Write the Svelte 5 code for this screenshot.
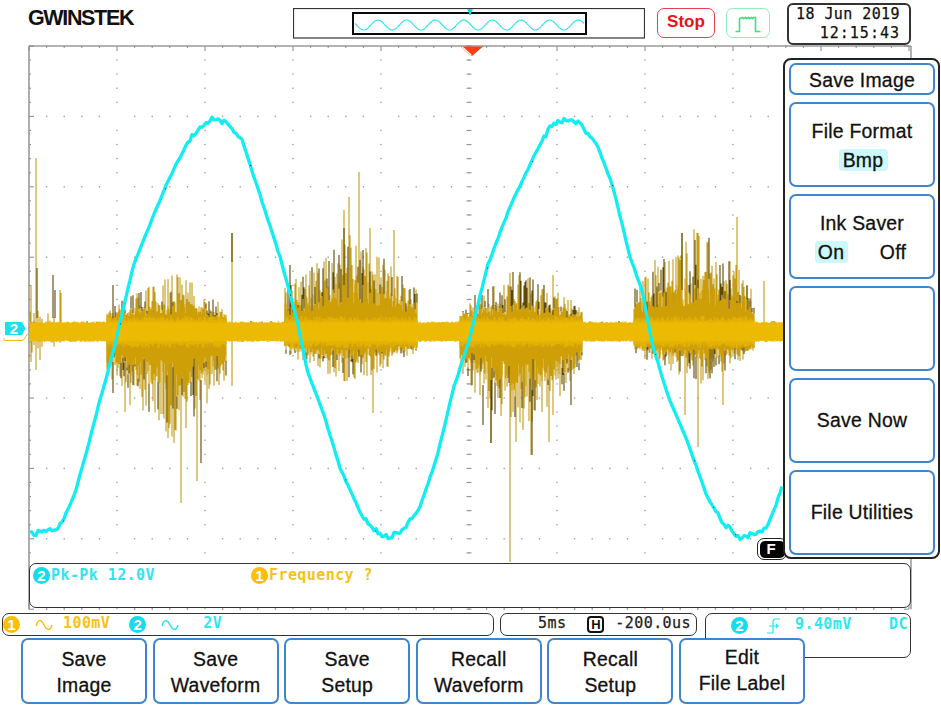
<script lang="ts">
	// graticule: 10 x 8 divisions, in page coordinates
	const left = 29;
	const top = 46;
	const divX = 88;
	const divY = 70.4;
	const right = left + divX * 10;
	const bottom = top + divY * 8;
	const midX = left + divX * 5;
	const midY = top + divY * 4;

	const bottomButtons = [
		['Save', 'Image'],
		['Save', 'Waveform'],
		['Save', 'Setup'],
		['Recall', 'Waveform'],
		['Recall', 'Setup'],
		['Edit', 'File Label']
	];

	let seed = 20190618;
	function rnd() {
		seed = (seed * 1664525 + 1013904223) % 4294967296;
		return seed / 4294967296;
	}

	function range(n: number) {
		return Array.from({ length: n }, (_, i) => i);
	}

	const dotsH: [number, number][] = [];
	const dotsV: [number, number][] = [];
	for (const r of range(9)) {
		for (const c of range(51)) {
			if (c % 5) dotsH.push([left + (c * divX) / 5, top + r * divY]);
		}
	}
	for (const c of range(11)) {
		for (const r of range(41)) {
			if (r % 5) dotsV.push([left + c * divX, top + (r * divY) / 5]);
		}
	}

	let tickPath = '';
	for (const c of range(51)) {
		const x = left + (c * divX) / 5;
		const len = c % 5 ? 2 : 5;
		tickPath += `M${x} ${top}v${len}M${x} ${bottom}v-${len}`;
		tickPath += `M${x} ${midY - 1}v2`;
	}
	for (const r of range(41)) {
		const y = top + (r * divY) / 5;
		const len = r % 5 ? 2 : 5;
		tickPath += `M${left} ${y}h${len}M${right} ${y}h-${len}`;
		tickPath += `M${midX - 2.5} ${y}h5`;
	}

	// cyan trace, traced by eye from the reference
	const cyanPoints = [
		[30, 533], [40, 533], [50, 531], [58, 527], [63, 520], [68, 509], [75, 493], [87, 450], [100, 400],
		[113, 353], [123, 310], [133, 267], [150, 224], [167, 183], [187, 143], [200, 127], [212, 119],
		[225, 122], [242, 140], [260, 195], [280, 257], [297, 320], [307, 370], [323, 412], [340, 468],
		[363, 518], [378, 533], [388, 537], [403, 531], [420, 507], [437, 457], [453, 390], [470, 337],
		[487, 267], [510, 207], [537, 150], [552, 124], [566, 119], [580, 124], [597, 145], [613, 187],
		[630, 257], [642, 290], [653, 347], [667, 393], [687, 440], [707, 497], [725, 525], [740, 538],
		[755, 533], [767, 527], [775, 508], [783, 483]
	];

	function cyanAt(x: number) {
		for (let i = 1; i < cyanPoints.length; i++) {
			const [x0, y0] = cyanPoints[i - 1];
			const [x1, y1] = cyanPoints[i];
			if (x <= x1) return y0 + ((y1 - y0) * (x - x0)) / (x1 - x0);
		}
		return 483;
	}

	let cyanPath = '';
	for (let x = 30; x <= 783; x += 2) {
		const noisy = x < 60 || Math.abs(x - 212) < 24 || Math.abs(x - 566) < 24 || Math.abs(x - 388) < 24 || Math.abs(x - 740) < 24;
		const y = cyanAt(x) + (rnd() - 0.5) * (noisy ? 5 : 1.6);
		cyanPath += `${x === 30 ? 'M' : 'L'}${x} ${y.toFixed(1)}`;
	}

	let cyanSpecks = '';
	for (const x of [63, 120, 165, 250, 290, 345, 375, 487, 532, 612, 655, 694, 713, 735]) {
		cyanSpecks += `M${x} ${(cyanAt(x) + 1).toFixed(1)}h1.2`;
	}

	// yellow trace: noise bursts described by up/down envelopes
	type Burst = { from: number; to: number; peak: number; up: number; down: number; coreUp: number; coreDown: number };
	const bursts: Burst[] = [
		{ from: 107, to: 226, peak: 178, up: 50, down: 92, coreUp: 20, coreDown: 50 },
		{ from: 285, to: 417, peak: 352, up: 88, down: 44, coreUp: 42, coreDown: 18 },
		{ from: 460, to: 582, peak: 515, up: 54, down: 90, coreUp: 20, coreDown: 50 },
		{ from: 634, to: 754, peak: 700, up: 92, down: 44, coreUp: 46, coreDown: 18 }
	];

	const spikeLight: number[][] = [
		[36, 158, 370], [31, 285, 362], [61, 293, 332], [40, 332, 360], [232, 233, 386], [181, 332, 503],
		[197, 332, 481], [168, 332, 438], [174, 332, 443], [125, 332, 412], [130, 332, 405], [359, 172, 332],
		[349, 197, 332], [344, 210, 332], [394, 230, 332], [370, 228, 332], [373, 332, 413], [510, 273, 562],
		[491, 332, 443], [531, 332, 455], [553, 275, 415], [571, 300, 332], [516, 332, 442], [549, 332, 442],
		[737, 217, 332], [698, 233, 447], [682, 233, 332], [685, 332, 415], [764, 281, 332], [747, 285, 332],
		[723, 332, 405], [707, 270, 332], [655, 260, 332], [665, 262, 332], [60, 290, 332]
	];
	const spikeDark: number[][] = [
		[37, 268, 318], [53, 275, 318], [55, 290, 318], [232, 233, 262], [113, 285, 318], [113, 362, 393],
		[201, 380, 463], [344, 228, 285], [363, 250, 285], [483, 425, 385], [571, 360, 405], [532, 390, 455],
		[491, 380, 443], [682, 233, 290], [695, 240, 285], [720, 265, 290], [730, 280, 300], [290, 265, 315]
	];

	let lightPath = '';
	let darkPath = '';
	let corePath = '';
	let midPath = '';
	let bandPath = '';

	for (const [x, a, b] of spikeLight) lightPath += `M${x} ${a}V${b}`;
	for (const [x, a, b] of spikeDark) darkPath += `M${x} ${a}V${b}`;

	function envelope(b: Burst, x: number) {
		const t = x < b.peak ? (x - b.from) / (b.peak - b.from) : (b.to - x) / (b.to - b.peak);
		return 0.42 + 0.58 * Math.max(t, 0);
	}

	for (let x = 30; x <= 783; x++) {
		bandPath += `M${x} ${(323 - rnd() * 1.6).toFixed(1)}V${(340.5 + rnd() * 1.6).toFixed(1)}`;
		if (rnd() < 0.1) darkPath += `M${x} ${(323 - rnd() * 2).toFixed(1)}v2`;
		const burst = bursts.find((b) => x >= b.from && x <= b.to);
		if (!burst) continue;
		const e = envelope(burst, x);
		const cu = 332 - (10 + burst.coreUp * e * (0.4 + rnd() * 0.7));
		const cd = 332 + 10 + burst.coreDown * e * (0.4 + rnd() * 0.7);
		corePath += `M${x} ${cu.toFixed(1)}V${cd.toFixed(1)}`;
		midPath += `M${x} ${(332 - 11 - rnd() * 5).toFixed(1)}V${(332 + 11 + rnd() * 5).toFixed(1)}`;
		if (rnd() < 0.88) {
			const su = 332 - burst.up * e * (0.55 + Math.pow(rnd(), 1.3) * 0.65);
			if (su < cu) {
				if (rnd() < 0.3) darkPath += `M${x} ${su.toFixed(1)}V${cu.toFixed(1)}`;
				else lightPath += `M${x} ${su.toFixed(1)}V332`;
			}
		}
		if (rnd() < 0.88) {
			const sd = 332 + burst.down * e * (0.55 + Math.pow(rnd(), 1.3) * 0.65);
			if (sd > cd) {
				if (rnd() < 0.3) darkPath += `M${x} ${cd.toFixed(1)}V${sd.toFixed(1)}`;
				else lightPath += `M${x} 332V${sd.toFixed(1)}`;
			}
		}
	}

	// the screen opens with a short burst too
	for (let x = 30; x <= 68; x += 2) {
		const e = Math.max(0.25, 1 - (x - 30) / 50);
		lightPath += `M${x} ${(332 - 35 * e * rnd()).toFixed(1)}V${(332 + 28 * e * rnd()).toFixed(1)}`;
	}

	// overview sine inside the memory bar
	let overviewPath = '';
	for (let x = 355; x <= 584; x++) {
		const y = 25 - 5 * Math.cos(((x - 378) / 28.6) * 2 * Math.PI);
		overviewPath += `${x === 355 ? 'M' : 'L'}${x} ${y.toFixed(1)}`;
	}
</script>

<div class="screen">
	<header class="top">
		<div class="logo">GWINSTEK</div>
		<div class="overview">
			<svg class="overview-svg" viewBox="293 8 352 31" width="352" height="31">
				<rect x="293.5" y="8.5" width="351" height="29.5" fill="none" stroke="#333" stroke-width="1.2" />
				<rect x="353" y="13" width="233" height="21" fill="none" stroke="#0a0a0a" stroke-width="2" />
				<path d={overviewPath} fill="none" stroke="#33e6ee" stroke-width="1.2" />
				<path d="M467 9h6l-2 4v2h-2v-2z" fill="#12d8de" />
			</svg>
		</div>
		<div class="stop">Stop</div>
		<div class="run">
			<svg viewBox="727.500 9.500 41 27" width="41" height="27">
				<path d="M735 31h4V18l3-1 1 1 2-1 1 1 2-1 1 1 2-1 1 1 1-1h2V31h5" fill="none" stroke="#39e27f" stroke-width="1.6" />
			</svg>
		</div>
		<div class="clock">
			<div>18 Jun 2019</div>
			<div class="time">12:15:43</div>
		</div>
	</header>

	<div class="scope">
		<svg class="plot" viewBox="{left} {top} 882 563" width="882" height="563">
			<line x1={left} y1={top} x2="911" y2={top} stroke="#9a9a9a" stroke-width="1.5" />
			<line x1={left} y1={top} x2={left} y2={bottom} stroke="#9a9a9a" stroke-width="1.6" />
			<line x1="911" y1={top} x2="911" y2={bottom} stroke="#9a9a9a" stroke-width="1.5" />
			<path d={tickPath} fill="none" stroke="#8a8a8a" stroke-width="1" />
			{#each dotsH as [x, y]}
				<rect x={x - 0.7} y={y - 0.7} width="1.4" height="1.4" fill="#a0a0a0" />
			{/each}
			{#each dotsV as [x, y]}
				<rect x={x - 0.7} y={y - 0.7} width="1.4" height="1.4" fill="#a0a0a0" />
			{/each}

			<path d={lightPath} fill="none" stroke="#c39b16" stroke-width="1.1" />
			<path d={corePath} fill="none" stroke="#cf9f08" stroke-width="1.05" />
			<path d={darkPath} fill="none" stroke="#5c4703" stroke-width="1.1" />
			<path d={midPath} fill="none" stroke="#e3b006" stroke-width="1.05" />
			<path d={bandPath} fill="none" stroke="#ecba02" stroke-width="1.05" />
			<path d={cyanPath} fill="none" stroke="#10eef2" stroke-width="3.3" stroke-linejoin="round" />
			<path d={cyanSpecks} fill="none" stroke="#0d4a55" stroke-width="1" />

			<path d="M461 46.5h22l-11 9.500z" fill="#ff3d12" />
			<path d="M462 47l9 8" stroke="#fff" stroke-width="1.6" />
			<path d="M460.500 46.500l10 9" stroke="#f3a08a" stroke-width="0.8" />

			<path d="M4 338v2.500h19l4.500-6.500" fill="none" stroke="#f2bd1c" stroke-width="1" />
			<path d="M5 322h17l3.500 6.500-3.500 6.500h-17z" fill="#12e4ee" />
			<text class="marker-num" x="14" y="334">2</text>
		</svg>

		<div class="readout">
			<span class="badge two">2</span>
			<span class="mono cyan pk">Pk-Pk 12.0V</span>
			<span class="badge one freq-badge">1</span>
			<span class="mono amber freq">Frequency ?</span>
		</div>

		<div class="fkey"><span>F</span></div>
	</div>

	<div class="status">
		<div class="pill channels">
			<span class="badge one">1</span>
			<svg class="ac" viewBox="0 0 18 12" width="18" height="12"><path d="M1 7C3 0 6 0 9 6s6 6 8 0" fill="none" stroke="#f6c012" stroke-width="1.5" /></svg>
			<span class="mono amber ch1-val">100mV</span>
			<span class="badge two ch2-badge">2</span>
			<svg class="ac" viewBox="0 0 18 12" width="18" height="12"><path d="M1 7C3 0 6 0 9 6s6 6 8 0" fill="none" stroke="#22e4ec" stroke-width="1.5" /></svg>
			<span class="mono cyan ch2-val">2V</span>
		</div>
		<div class="pill timebase">
			<span class="mono dark">5ms</span>
			<span class="h-icon">H</span>
			<span class="mono dark">-200.0us</span>
		</div>
		<div class="trigger">
			<span class="badge two">2</span>
			<svg class="edge" viewBox="0 0 13 16" width="13" height="16"><path d="M0 15H6V4Q6 1 9 1H13M2 8H11M9 6l2 2-2 2" fill="none" stroke="#22e4ec" stroke-width="1.2" /></svg>
			<span class="mono cyan trig-val">9.40mV</span>
			<span class="mono cyan trig-val dc">DC</span>
		</div>
	</div>

	<nav class="softkeys">
		{#each bottomButtons as [first, second], i}
			<button class="softkey" class:raised={i === 5}>
				<span>{first}</span>
				<span>{second}</span>
			</button>
		{/each}
	</nav>

	<aside class="menu">
		<button class="softkey menu-title">Save Image</button>
		<button class="softkey menu-item">
			<span>File Format</span>
			<span class="options"><span class="on bmp">Bmp</span></span>
		</button>
		<button class="softkey menu-item">
			<span>Ink Saver</span>
			<span class="options"><span class="on opt">On</span><span class="opt">Off</span></span>
		</button>
		<button class="softkey menu-item" aria-label="empty"></button>
		<button class="softkey menu-item single">Save Now</button>
		<button class="softkey menu-item single">File Utilities</button>
	</aside>
</div>

<style>
	:global(body) {
		background: #fff;
	}

	.screen {
		position: relative;
		width: 941px;
		height: 705px;
		overflow: hidden;
		background: #fff;
		font-family: 'Liberation Sans', Arial, sans-serif;
		color: #111;
	}

	.top {
		display: flex;
		align-items: flex-start;
		height: 46px;
		padding-left: 28px;
	}

	.logo {
		width: 105px;
		margin-top: 5px;
		font-size: 21.5px;
		line-height: 26px;
		font-weight: 700;
		letter-spacing: -1.35px;
		color: #111;
		white-space: nowrap;
	}

	.overview {
		margin: 8px 0 0 160px;
		height: 31px;
	}

	.overview-svg {
		display: block;
	}

	.stop {
		width: 58px;
		height: 30px;
		box-sizing: border-box;
		margin: 8px 0 0 12px;
		border: 1.5px solid #e8404c;
		border-radius: 7px;
		text-align: center;
		font-size: 17px;
		line-height: 25px;
		font-weight: 700;
		color: #e8101e;
	}

	.run {
		display: flex;
		align-items: center;
		justify-content: center;
		width: 44px;
		height: 30px;
		box-sizing: border-box;
		margin: 8px 0 0 11px;
		border: 1.5px solid #8ef0b8;
		border-radius: 7px;
	}

	.clock {
		width: 124px;
		height: 42px;
		box-sizing: border-box;
		margin: 3px 0 0 17px;
		padding: 0 9px 0 0;
		border: 2px solid #333;
		border-radius: 6px;
		background: #fff;
		text-align: right;
		font-family: 'DejaVu Sans Mono', monospace;
		font-size: 15px;
		line-height: 18px;
		letter-spacing: 0.42px;
		color: #111;
		-webkit-text-stroke: 0.25px #111;
	}

	.time {
		margin-top: 1px;
		letter-spacing: 1px;
	}

	.scope {
		position: relative;
		margin-left: 29px;
		width: 882px;
		height: 563px;
	}

	.plot {
		display: block;
		overflow: visible;
	}

	.marker-num {
		font-family: 'Liberation Sans', Arial, sans-serif;
		font-size: 15px;
		font-weight: 700;
		fill: #fff;
		text-anchor: middle;
	}

	.readout {
		position: absolute;
		left: 0;
		top: 517px;
		box-sizing: border-box;
		width: 882px;
		height: 45px;
		display: flex;
		align-items: flex-start;
		padding: 3px 0 0 3px;
		border: 1.5px solid #333;
		border-radius: 7px;
		background: #fff;
	}

	.pk {
		width: 200px;
		margin: -1px 0 0 1px;
	}

	.freq {
		margin-top: -1px;
	}

	.freq-badge {
		margin-right: 1px;
	}

	.mono {
		font-family: 'DejaVu Sans Mono', monospace;
		font-size: 15px;
		line-height: 18px;
		letter-spacing: 0.42px;
		font-weight: 700;
		white-space: pre;
	}

	.cyan {
		color: #2fe6ee;
	}

	.amber {
		color: #f7c21a;
	}

	.dark {
		color: #222;
		font-weight: 400;
		-webkit-text-stroke: 0.25px #222;
	}

	.badge {
		display: inline-flex;
		align-items: center;
		justify-content: center;
		flex: none;
		width: 17px;
		height: 17px;
		border-radius: 50%;
		font-size: 15px;
		font-weight: 700;
		color: #fff;
	}

	.badge.one {
		background: #fdbd08;
	}

	.badge.two {
		background: #14dcee;
	}

	.fkey {
		position: absolute;
		left: 728px;
		top: 492px;
		box-sizing: border-box;
		width: 30px;
		height: 22px;
		padding: 1.5px;
		border: 1.5px solid #222;
		border-radius: 7px;
		background: #fff;
	}

	.fkey span {
		display: block;
		height: 100%;
		border-radius: 5px;
		background: #050505;
		color: #fff;
		font-size: 15px;
		line-height: 16px;
		font-weight: 700;
		padding-left: 7px;
	}

	.status {
		display: flex;
		height: 23px;
		margin-top: 4px;
		padding-left: 2px;
	}

	.pill {
		box-sizing: border-box;
		height: 23px;
		display: flex;
		align-items: center;
		border: 1.5px solid #333;
		border-radius: 7px;
	}

	.pill .mono {
		margin-bottom: 3px;
	}

	.channels {
		width: 492px;
		padding-left: 0;
	}

	.channels .ac {
		margin-left: 15px;
	}

	.ch1-val {
		margin-left: 10px;
	}

	.ch2-badge {
		margin-left: 19px;
	}

	.ch2-val {
		margin-left: 24px;
	}

	.timebase {
		width: 197px;
		margin-left: 6px;
		padding-left: 37px;
	}

	.h-icon {
		box-sizing: border-box;
		width: 17px;
		height: 17px;
		margin: 0 11px 0 21px;
		border: 2px solid #111;
		border-radius: 4px;
		text-align: center;
		font-size: 13px;
		line-height: 13px;
		font-weight: 700;
	}

	.trigger {
		box-sizing: border-box;
		width: 206px;
		height: 45px;
		display: flex;
		align-items: flex-start;
		margin-left: 8px;
		padding: 3px 2px 0 25px;
		border: 1.5px solid #333;
		border-radius: 7px;
	}

	.trig-val {
		margin-top: -2px;
	}

	.edge {
		margin: 1px 15px 0 19px;
	}

	.dc {
		margin-left: auto;
	}

	.softkeys {
		position: relative;
		display: grid;
		grid-template-columns: repeat(6, 126px);
		column-gap: 5.6px;
		width: max-content;
		margin: 2px 0 0 21px;
	}

	.softkey {
		display: flex;
		flex-direction: column;
		align-items: center;
		justify-content: center;
		box-sizing: border-box;
		margin: 0;
		padding: 0;
		border: 2px solid #3f86cf;
		border-radius: 7px;
		background: #fff;
		font-family: 'Liberation Sans', Arial, sans-serif;
		font-size: 19.4px;
		line-height: 26px;
		letter-spacing: 0.25px;
		color: #111;
		-webkit-text-stroke: 0.3px #111;
	}

	.softkeys .softkey {
		height: 66px;
		padding-top: 2px;
	}

	.softkeys .raised {
		padding-top: 0;
		padding-bottom: 3px;
	}

	.menu {
		position: absolute;
		left: 783px;
		top: 58px;
		box-sizing: border-box;
		width: 157px;
		height: 501px;
		display: flex;
		flex-direction: column;
		gap: 7px;
		padding: 3px 3px 0 4px;
		border: 2px solid #222;
		border-radius: 8px;
		background: #fff;
	}

	.menu-title {
		flex: none;
		height: 32px;
		padding-top: 2px;
	}

	.menu-item {
		flex: none;
		height: 85px;
	}

	.single {
		padding-bottom: 2px;
	}

	.options {
		display: flex;
		justify-content: center;
		gap: 29px;
		margin-top: 5px;
		line-height: 22px;
	}

	.on {
		border-radius: 4px;
		background: #ccf8fb;
	}

	.bmp {
		width: 49px;
		margin-left: 2px;
	}

	.opt {
		width: 33px;
		text-align: center;
	}
</style>
